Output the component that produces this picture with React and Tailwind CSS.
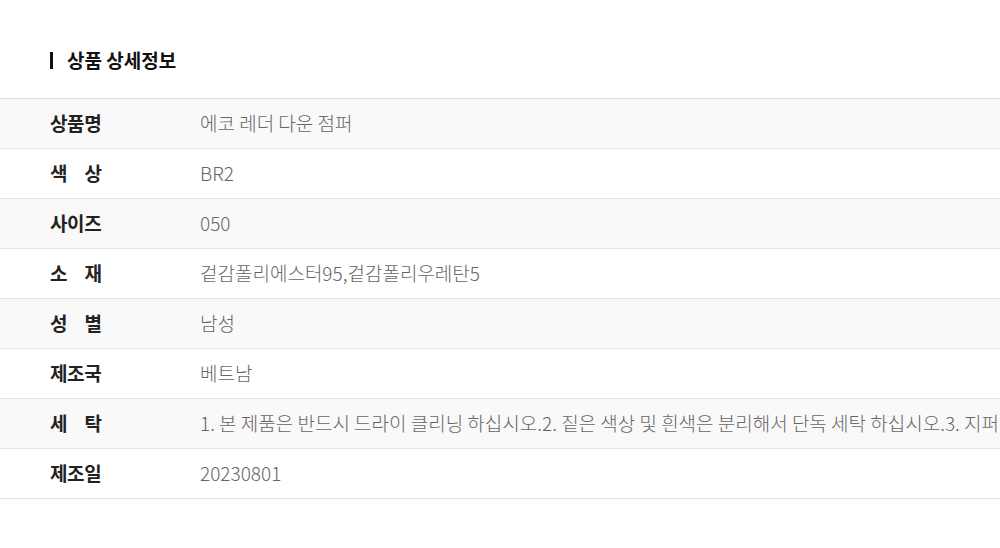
import React from 'react';

const rows = [
  { label: ['상품명'], value: '에코 레더 다운 점퍼' },
  { label: ['색', '상'], value: 'BR2' },
  { label: ['사이즈'], value: '050' },
  { label: ['소', '재'], value: '겉감폴리에스터95,겉감폴리우레탄5' },
  { label: ['성', '별'], value: '남성' },
  { label: ['제조국'], value: '베트남' },
  {
    label: ['세', '탁'],
    value:
      '1. 본 제품은 반드시 드라이 클리닝 하십시오.2. 짙은 색상 및 흰색은 분리해서 단독 세탁 하십시오.3. 지퍼,',
  },
  { label: ['제조일'], value: '20230801' },
];

export default function App() {
  return (
    <div className="w-[1000px] h-[548px] bg-white overflow-hidden font-['Noto_Sans_CJK_KR','Noto_Sans',sans-serif]">
      <div className="pt-[47px]">
        <h2 className="flex items-center h-[26px] pl-[50px] text-[19px] font-bold text-[#111]">
          <span className="w-[3px] h-[17px] bg-[#111] mr-[14px]" />
          상품 상세정보
        </h2>
        <div className="mt-[25px] border-t border-[#dddddd]">
          {rows.map((row, i) => (
            <div
              key={i}
              className={`flex items-center h-[50px] border-b border-[#e3e3e3] ${i % 2 === 0 ? 'bg-[#f9f9f9]' : 'bg-white'}`}
            >
              <div className="w-[200px] shrink-0 pl-[50px] text-[19px] font-bold text-[#222]">
                {row.label.length > 1 ? (
                  <span className="flex justify-between w-[52px]">
                    {row.label.map((c) => (
                      <span key={c}>{c}</span>
                    ))}
                  </span>
                ) : (
                  <span className="tracking-[-0.4px]">{row.label[0]}</span>
                )}
              </div>
              <div className="min-w-0 overflow-hidden text-[19px] font-light text-[#666] whitespace-nowrap">
                {row.value}
              </div>
            </div>
          ))}
        </div>
      </div>
    </div>
  );
}
